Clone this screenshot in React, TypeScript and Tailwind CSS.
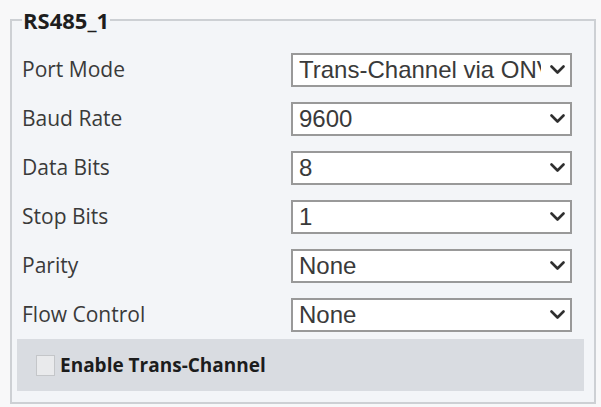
import React from "react";

const rows: [string, string][] = [
  ["Port Mode", "Trans-Channel via ONVIF"],
  ["Baud Rate", "9600"],
  ["Data Bits", "8"],
  ["Stop Bits", "1"],
  ["Parity", "None"],
  ["Flow Control", "None"],
];

function Chevron() {
  return (
    <svg width="15" height="10" viewBox="0 0 15 10" className="shrink-0">
      <polyline
        points="1.5,1.5 7.5,7.5 13.5,1.5"
        fill="none"
        stroke="#2f2f2f"
        strokeWidth="2.6"
        strokeLinecap="round"
        strokeLinejoin="round"
      />
    </svg>
  );
}

function SelectBox({ value }: { value: string }) {
  return (
    <div className="flex h-[34px] w-[281px] items-center border-2 border-[#999999] bg-white pl-[6px] pr-[5px]">
      <div
        className="flex-1 overflow-hidden whitespace-nowrap text-[24px] leading-[28px] text-[#3a3a3a]"
        style={{ fontFamily: '"Liberation Sans", Arial, sans-serif' }}
      >
        {value}
      </div>
      <div className="ml-[9px] flex items-center">
        <Chevron />
      </div>
    </div>
  );
}

export default function App() {
  return (
    <div
      className="h-[407px] w-[601px] bg-[#f8f8f9] pl-[10px] pr-[5px] pt-[6px]"
      style={{ fontFamily: '"Open Sans", "Noto Sans", sans-serif' }}
    >
      <fieldset className="border-2 border-[#cdd0d4] bg-[#f3f5f8] pb-[11px] pl-[5px] pr-[10px] pt-[19px]">
        <legend className="ml-[5px] px-[1px] text-[22px] font-bold leading-[28px] text-[#1e1e1e]">
          RS485_1
        </legend>
        <div className="flex flex-col gap-[15px] pl-[5px] pr-[12px]">
          {rows.map(([label, value]) => (
            <div key={label} className="flex items-center justify-between">
              <span className="text-[21px] text-[#3a3a3a]">{label}</span>
              <SelectBox value={value} />
            </div>
          ))}
        </div>
        <div className="mt-[7px] flex h-[52px] items-center bg-[#d9dce1] pl-[19px]">
          <span className="h-[21px] w-[19px] border border-[#c4c6c9] bg-[#e9eaec]" />
          <span className="ml-[5px] text-[19px] font-bold text-[#1c1c1c]">
            Enable Trans-Channel
          </span>
        </div>
      </fieldset>
    </div>
  );
}
